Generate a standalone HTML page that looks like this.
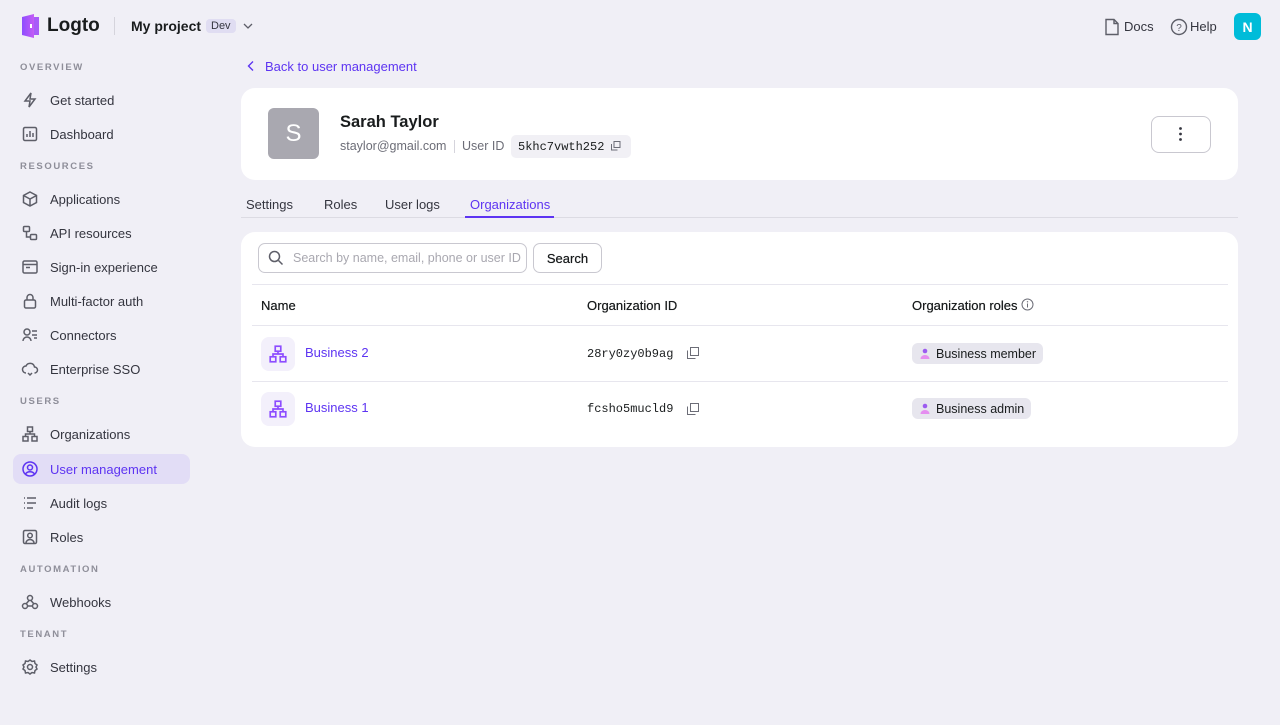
<!DOCTYPE html>
<html><head><meta charset="utf-8"><style>
*{box-sizing:border-box;margin:0;padding:0}
body{width:1280px;height:725px;background:#f0eff6;font-family:"Liberation Sans",sans-serif;color:#191c1d;position:relative;overflow:hidden;font-size:13px}
.abs{position:absolute}
.sec{position:absolute;left:20px;font-size:9.5px;letter-spacing:1.6px;color:#8e8e99;font-weight:600}
.it{position:absolute;left:13px;width:177px;height:30px;border-radius:8px;display:flex;align-items:center;padding-left:8px;font-size:13px;color:#34353f}
.it svg{width:18px;height:18px;margin-right:11px;stroke:#5d5e68;fill:none;stroke-width:1.5}
.it.act{background:#e2ddf6;color:#5d34f2}
.it.act svg{stroke:#5d34f2}
.card{position:absolute;background:#fff;border-radius:14px}
.mono{font-family:"Liberation Mono",monospace}
.tab{position:absolute;top:197px;font-size:13px;color:#34353f}
.chip{position:absolute;left:912px;height:21px;background:#e7e6ee;border-radius:6px;display:flex;align-items:center;padding:0 7px 0 8px;font-size:12.5px}
.ic{position:absolute;left:261px;width:34px;height:34px;border-radius:8px;background:#f3f0fb;display:flex;align-items:center;justify-content:center}
.th{position:absolute;top:298px;font-size:13px;color:#191c1d;text-shadow:0 0 0.4px #191c1d}
</style></head><body>
<svg class="abs" style="left:20px;top:14px" width="20" height="24" viewBox="0 0 20 24"><defs><linearGradient id="g" x1="0" x2="1"><stop offset="0" stop-color="#8d4dff"/><stop offset="1" stop-color="#c45cf5"/></linearGradient></defs><path d="M2 3 L14 0 V24 L2 21Z" fill="url(#g)"/><rect x="14" y="3" width="5" height="18" fill="#a85cf8"/><rect x="10" y="10" width="2" height="4" fill="#fff"/></svg>
<div class="abs" style="left:47px;top:15px;font-size:19px;font-weight:600;color:#191c1d">Logto</div>
<div class="abs" style="left:114px;top:17px;width:1px;height:18px;background:#d5d4dc"></div>
<div class="abs" style="left:131px;top:18px;font-size:14px;font-weight:600">My project</div>
<div class="abs" style="left:206px;top:19px;background:#e0ddf2;border-radius:4px;padding:1px 5px;font-size:11px;color:#34353f">Dev</div>
<svg class="abs" style="left:243px;top:22px" width="10" height="8"><path d="M1 2 L5 6 L9 2" stroke="#5d5e68" fill="none" stroke-width="1.3"/></svg>
<svg class="abs" style="left:1104px;top:18px" width="16" height="18" viewBox="0 0 16 18"><path d="M2 1.5 H10 L14 5.5 V16.5 H2Z M10 1.5 V5.5 H14" stroke="#5d5e68" fill="none" stroke-width="1.4"/></svg>
<div class="abs" style="left:1124px;top:19px;font-size:13px;color:#34353f">Docs</div>
<svg class="abs" style="left:1170px;top:18px" width="18" height="18"><circle cx="9" cy="9" r="7.5" stroke="#5d5e68" fill="none" stroke-width="1.4"/><text x="9" y="13" font-size="10" text-anchor="middle" fill="#5d5e68" font-family="Liberation Sans">?</text></svg>
<div class="abs" style="left:1190px;top:19px;font-size:13px;color:#34353f">Help</div>
<div class="abs" style="left:1234px;top:13px;width:27px;height:27px;border-radius:6px;background:#00bcd9;color:#fff;font-size:14px;font-weight:600;display:flex;align-items:center;justify-content:center">N</div>
<div class="sec" style="top:62px">OVERVIEW</div>
<div class="it" style="top:85px"><svg viewBox="0 0 18 18"><path d="M10 2 L4 10 H9 L8 16 L14 8 H9Z"/></svg>Get started</div>
<div class="it" style="top:119px"><svg viewBox="0 0 18 18"><rect x="2.5" y="2.5" width="13" height="13" rx="1.5"/><path d="M6 12V9 M9 12V6 M12 12V8"/></svg>Dashboard</div>
<div class="sec" style="top:161px">RESOURCES</div>
<div class="it" style="top:184px"><svg viewBox="0 0 18 18"><path d="M9 2 L15.5 5.5 V12.5 L9 16 L2.5 12.5 V5.5Z M2.5 5.5 L9 9 L15.5 5.5 M9 9 V16"/></svg>Applications</div>
<div class="it" style="top:218px"><svg viewBox="0 0 18 18"><rect x="2.5" y="2.5" width="6" height="5" rx="1"/><rect x="9.5" y="10.5" width="6" height="5" rx="1"/><path d="M5.5 7.5 V13 H9.5"/></svg>API resources</div>
<div class="it" style="top:252px"><svg viewBox="0 0 18 18"><rect x="2" y="3" width="14" height="12" rx="1.5"/><path d="M2 6.5 H16 M5 9.5 H9"/></svg>Sign-in experience</div>
<div class="it" style="top:286px"><svg viewBox="0 0 18 18"><rect x="3.5" y="8" width="11" height="8" rx="1.5"/><path d="M6 8 V5.5 a3 3 0 0 1 6 0 V8"/></svg>Multi-factor auth</div>
<div class="it" style="top:320px"><svg viewBox="0 0 18 18"><circle cx="6" cy="6" r="3"/><path d="M2 15 a4 4 0 0 1 8 0 M11 5 h5 M11 9 h5 M13 12 h3"/></svg>Connectors</div>
<div class="it" style="top:354px"><svg viewBox="0 0 18 18"><path d="M5 13 a3.5 3.5 0 0 1 0-7 a4.5 4.5 0 0 1 8.5 1 a3 3 0 0 1 0 6 M7 13 l2 2 l2-2"/></svg>Enterprise SSO</div>
<div class="sec" style="top:396px">USERS</div>
<div class="it" style="top:419px"><svg viewBox="0 0 18 18"><rect x="6.5" y="2" width="5" height="4.5"/><rect x="2" y="11.5" width="5" height="4.5"/><rect x="11" y="11.5" width="5" height="4.5"/><path d="M9 6.5 V9 M4.5 11.5 V9 H13.5 V11.5"/></svg>Organizations</div>
<div class="it act" style="top:454px"><svg viewBox="0 0 18 18"><circle cx="9" cy="9" r="7"/><circle cx="9" cy="7.5" r="2.5"/><path d="M4.5 14 a5 4 0 0 1 9 0"/></svg>User management</div>
<div class="it" style="top:488px"><svg viewBox="0 0 18 18"><path d="M3 4 H4 M6 4 H15 M3 9 H4 M6 9 H15 M3 14 H4 M6 14 H12"/></svg>Audit logs</div>
<div class="it" style="top:522px"><svg viewBox="0 0 18 18"><rect x="2.5" y="2.5" width="13" height="13" rx="1.5"/><circle cx="9" cy="7.5" r="2.3"/><path d="M5 15 a4 3.5 0 0 1 8 0"/></svg>Roles</div>
<div class="sec" style="top:564px">AUTOMATION</div>
<div class="it" style="top:587px"><svg viewBox="0 0 18 18"><circle cx="9" cy="5" r="2.5"/><circle cx="4" cy="13" r="2.5"/><circle cx="14" cy="13" r="2.5"/><path d="M8 7.5 L5 11 M6.5 13 H11.5 M10 7.5 L13 11"/></svg>Webhooks</div>
<div class="sec" style="top:629px">TENANT</div>
<div class="it" style="top:652px"><svg viewBox="0 0 18 18"><circle cx="9" cy="9" r="2.5"/><path d="M9 2 L11 3.5 L13.5 3 L14 5.5 L16 7 L15 9 L16 11 L14 12.5 L13.5 15 L11 14.5 L9 16 L7 14.5 L4.5 15 L4 12.5 L2 11 L3 9 L2 7 L4 5.5 L4.5 3 L7 3.5Z"/></svg>Settings</div>
<svg class="abs" style="left:246px;top:60px" width="10" height="12"><path d="M7 1.5 L2.5 6 L7 10.5" stroke="#5d34f2" fill="none" stroke-width="1.4"/></svg>
<div class="abs" style="left:265px;top:59px;font-size:13px;color:#5d34f2">Back to user management</div>
<div class="card" style="left:241px;top:88px;width:997px;height:92px"></div>
<div class="abs" style="left:268px;top:108px;width:51px;height:51px;border-radius:6px;background:#a9a8b0;color:#fff;font-size:24px;display:flex;align-items:center;justify-content:center">S</div>
<div class="abs" style="left:340px;top:113px;font-size:16.5px;font-weight:600">Sarah Taylor</div>
<div class="abs" style="left:340px;top:139px;font-size:12.5px;color:#6c6d77">staylor@gmail.com</div>
<div class="abs" style="left:454px;top:140px;width:1px;height:13px;background:#d5d4dc"></div>
<div class="abs" style="left:462px;top:139px;font-size:12.5px;color:#6c6d77">User ID</div>
<div class="abs mono" style="left:511px;top:135px;width:120px;height:23px;background:#f1f0f5;border-radius:5px;font-size:12px;padding:5px 0 0 7px;color:#191c1d">5khc7vwth252</div>
<svg class="abs" style="left:611px;top:141px" width="10" height="10"><rect x="3" y="0.5" width="6" height="6" fill="none" stroke="#6c6d77"/><path d="M0.5 3 V9 H6.5" fill="none" stroke="#6c6d77"/></svg>
<div class="abs" style="left:1151px;top:116px;width:60px;height:37px;border:1px solid #c9c8d0;border-radius:8px;background:#fff"></div>
<svg class="abs" style="left:1178px;top:126px" width="5" height="16"><circle cx="2.5" cy="2.5" r="1.4" fill="#34353f"/><circle cx="2.5" cy="8" r="1.4" fill="#34353f"/><circle cx="2.5" cy="13.5" r="1.4" fill="#34353f"/></svg>
<div class="tab" style="left:246px">Settings</div>
<div class="tab" style="left:324px">Roles</div>
<div class="tab" style="left:385px">User logs</div>
<div class="tab" style="left:470px;color:#5d34f2">Organizations</div>
<div class="abs" style="left:241px;top:217px;width:997px;height:1px;background:#dcdbe3"></div>
<div class="abs" style="left:465px;top:216px;width:89px;height:2px;background:#5d34f2"></div>
<div class="card" style="left:241px;top:232px;width:997px;height:215px"></div>
<div class="abs" style="left:258px;top:243px;width:269px;height:30px;border:1px solid #c9c8d0;border-radius:7px"></div>
<svg class="abs" style="left:268px;top:250px" width="16" height="16"><circle cx="6.5" cy="6.5" r="5" stroke="#5d5e68" fill="none" stroke-width="1.5"/><path d="M10.5 10.5 L14.5 14.5" stroke="#5d5e68" stroke-width="1.5"/></svg>
<div class="abs" style="left:293px;top:251px;font-size:12.5px;color:#a9a8b0">Search by name, email, phone or user ID</div>
<div class="abs" style="left:533px;top:243px;width:69px;height:30px;border:1px solid #c9c8d0;border-radius:7px;font-size:13px;text-shadow:0 0 0.5px #191c1d;display:flex;align-items:center;justify-content:center">Search</div>
<div class="abs" style="left:252px;top:284px;width:976px;height:1px;background:#e7e6ee"></div>
<div class="th" style="left:261px">Name</div>
<div class="th" style="left:587px">Organization ID</div>
<div class="th" style="left:912px">Organization roles</div>
<svg class="abs" style="left:1021px;top:298px" width="13" height="13"><circle cx="6.5" cy="6.5" r="5.5" stroke="#6c6d77" fill="none"/><path d="M6.5 5.5 V9.5" stroke="#6c6d77"/><circle cx="6.5" cy="3.8" r=".7" fill="#6c6d77"/></svg>
<div class="abs" style="left:252px;top:325px;width:976px;height:1px;background:#e7e6ee"></div>
<div class="abs" style="left:252px;top:381px;width:976px;height:1px;background:#e7e6ee"></div>
<div class="ic" style="top:337px"><svg width="20" height="20" viewBox="0 0 18 18" fill="none" stroke="#8d4dff" stroke-width="1.5"><rect x="6.5" y="2" width="5" height="4.5"/><rect x="2" y="11.5" width="5" height="4.5"/><rect x="11" y="11.5" width="5" height="4.5"/><path d="M9 6.5 V9 M4.5 11.5 V9 H13.5 V11.5"/></svg></div>
<div class="ic" style="top:392px"><svg width="20" height="20" viewBox="0 0 18 18" fill="none" stroke="#8d4dff" stroke-width="1.5"><rect x="6.5" y="2" width="5" height="4.5"/><rect x="2" y="11.5" width="5" height="4.5"/><rect x="11" y="11.5" width="5" height="4.5"/><path d="M9 6.5 V9 M4.5 11.5 V9 H13.5 V11.5"/></svg></div>
<div class="abs" style="left:305px;top:345px;font-size:13px;color:#5d34f2">Business 2</div>
<div class="abs" style="left:305px;top:400px;font-size:13px;color:#5d34f2">Business 1</div>
<div class="abs mono" style="left:587px;top:347px;font-size:12px">28ry0zy0b9ag</div>
<div class="abs mono" style="left:587px;top:402px;font-size:12px">fcsho5mucld9</div>
<svg class="abs" style="left:687px;top:347px" width="12" height="12"><rect x="3.5" y="0.5" width="8" height="8" fill="none" stroke="#6c6d77"/><path d="M0.5 3.5 V11.5 H8.5" fill="none" stroke="#6c6d77"/></svg>
<svg class="abs" style="left:687px;top:403px" width="12" height="12"><rect x="3.5" y="0.5" width="8" height="8" fill="none" stroke="#6c6d77"/><path d="M0.5 3.5 V11.5 H8.5" fill="none" stroke="#6c6d77"/></svg>
<div class="chip" style="top:343px"><svg width="11" height="11" style="margin-right:5px"><circle cx="5" cy="3" r="2.3" fill="#9c5cf0"/><path d="M0.5 11 a4.5 4 0 0 1 9 0Z" fill="#e58ef0"/></svg>Business member</div>
<div class="chip" style="top:398px"><svg width="11" height="11" style="margin-right:5px"><circle cx="5" cy="3" r="2.3" fill="#9c5cf0"/><path d="M0.5 11 a4.5 4 0 0 1 9 0Z" fill="#e58ef0"/></svg>Business admin</div>
</body></html>
